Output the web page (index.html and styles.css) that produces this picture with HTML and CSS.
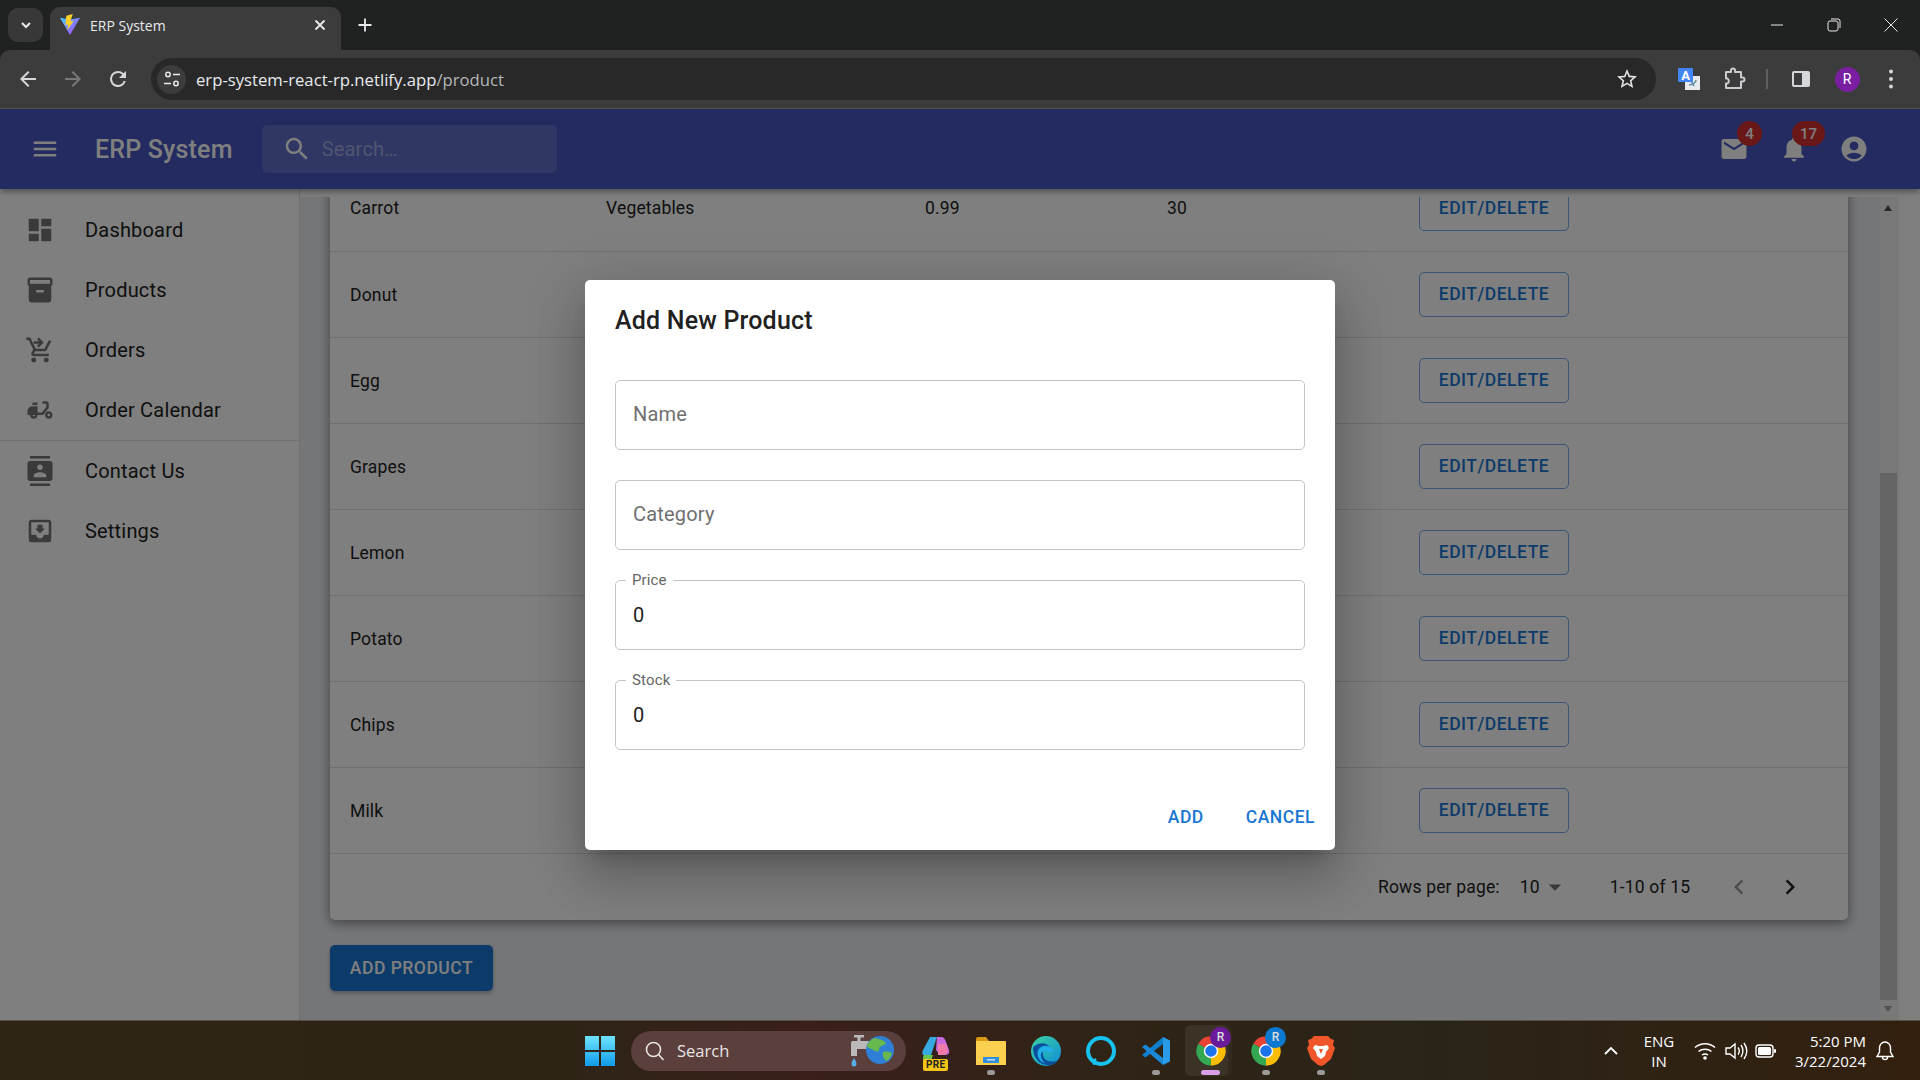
FILE: index.html
```html
<!DOCTYPE html>
<html lang="en">
<head>
    <meta charset="UTF-8">
    <meta name="viewport" content="width=device-width, initial-scale=1.0">
    <title>ERP System</title>
    <link rel="stylesheet" href="styles.css">
</head>
<body>
    <svg class="defs" width="0" height="0">
        <symbol id="chrome" viewBox="0 0 24 24">
            <path fill="#ea4335" d="M12 12L2.47 6.5A11 11 0 0 1 21.53 6.5z"/>
            <path fill="#fbbc04" d="M12 12L21.53 6.5A11 11 0 0 1 12 23z"/>
            <path fill="#34a853" d="M12 12L12 23A11 11 0 0 1 2.47 6.5z"/>
            <circle cx="12" cy="12" r="5.4" fill="#fff"/>
            <circle cx="12" cy="12" r="4.3" fill="#1a73e8"/>
        </symbol>
    </svg>

    <!-- browser chrome -->
    <div class="tabstrip">
        <button class="tab-search"><svg width="16" height="16" viewBox="0 0 16 16"><path d="M4 6l4 4 4-4" fill="none" stroke="#e8eaed" stroke-width="2"/></svg></button>
        <div class="tab">
            <svg class="favicon" width="22" height="22" viewBox="0 0 24 24">
                <defs><linearGradient id="vite" x1="0" y1="0" x2="1" y2="1"><stop offset="0" stop-color="#41d1ff"/><stop offset="1" stop-color="#bd34fe"/></linearGradient></defs>
                <path fill="url(#vite)" d="M1 4l11 2 11-2-11 19z"/>
                <path fill="#ffd028" d="M15 0L8 2l-1 10 3-.5-1 6 7-10-3.5.5z"/>
            </svg>
            <span class="tab-title">ERP System</span>
            <svg width="14" height="14" viewBox="0 0 14 14"><path d="M2.5 2.5l9 9m0-9l-9 9" stroke="#e8eaed" stroke-width="1.8"/></svg>
        </div>
        <button class="new-tab"><svg width="16" height="16" viewBox="0 0 16 16"><path d="M8 1.5v13M1.5 8h13" stroke="#e8eaed" stroke-width="1.8"/></svg></button>
        <div class="window-controls">
            <button><svg width="14" height="14" viewBox="0 0 14 14"><path d="M1 7h12" stroke="#e8e8e8"/></svg></button>
            <button><svg width="14" height="14" viewBox="0 0 14 14"><rect x="1" y="3" width="10" height="10" rx="2" fill="none" stroke="#e8e8e8"/><path d="M4 1h7a2 2 0 0 1 2 2v7" fill="none" stroke="#e8e8e8"/></svg></button>
            <button><svg width="14" height="14" viewBox="0 0 14 14"><path d="M.5.5l13 13m0-13l-13 13" stroke="#e8e8e8"/></svg></button>
        </div>
    </div>
    <div class="toolbar">
        <button class="tool"><svg width="24" height="24" viewBox="0 0 24 24"><path fill="#d5d7da" d="M20 11H7.83l5.59-5.59L12 4l-8 8 8 8 1.41-1.41L7.83 13H20z"/></svg></button>
        <button class="tool"><svg width="24" height="24" viewBox="0 0 24 24"><path fill="#77797b" d="M12 4l-1.41 1.41L16.17 11H4v2h12.17l-5.58 5.59L12 20l8-8z"/></svg></button>
        <button class="tool"><svg width="24" height="24" viewBox="0 0 24 24"><path fill="#d5d7da" d="M17.65 6.35A7.96 7.96 0 0 0 12 4a8 8 0 1 0 7.73 10h-2.08A6 6 0 1 1 12 6c1.66 0 3.14.69 4.22 1.78L13 11h7V4z"/></svg></button>
        <div class="omnibox">
            <span class="site-info"><svg width="20" height="20" viewBox="0 0 20 20"><circle cx="6" cy="5.5" r="2.2" fill="none" stroke="#e8eaed" stroke-width="1.5"/><path d="M11 5.5h7M2 14.5h7" stroke="#e8eaed" stroke-width="1.5"/><circle cx="14" cy="14.5" r="2.2" fill="none" stroke="#e8eaed" stroke-width="1.5"/></svg></span>
            <span class="url">erp-system-react-rp.netlify.app<span class="url-path">/product</span></span>
            <svg class="star" width="24" height="24" viewBox="0 0 24 24"><path fill="#e0e2e4" d="M22 9.24l-7.19-.62L12 2 9.19 8.63 2 9.24l5.46 4.73L5.82 21 12 17.27 18.18 21l-1.63-7.03L22 9.24zM12 15.4l-3.76 2.27 1-4.28-3.32-2.88 4.38-.38L12 6.1l1.71 4.04 4.38.38-3.32 2.88 1 4.28L12 15.4z"/></svg>
        </div>
        <button class="tool tool-first"><svg width="24" height="24" viewBox="0 0 24 24"><rect x="8" y="9" width="15" height="14" fill="#e8eaed"/><path d="M12 18c3 0 7-2 7-5M14 14l3 5" stroke="#5f8ca0" stroke-width="1.5" fill="none"/><rect x="1" y="1" width="15" height="14" rx="1" fill="#4285f4"/><text x="8.5" y="12.5" class="translate-a">A</text></svg></button>
        <button class="tool"><svg width="24" height="24" viewBox="0 0 24 24"><path fill="none" stroke="#c9cbce" stroke-width="2" stroke-linejoin="round" d="M4 5h5V3.5a2 2 0 0 1 4 0V5h6v5.5h1.5a2 2 0 0 1 0 4H19V21H4v-4.5h1.5a3 3 0 0 0 0-5H4z"/></svg></button>
        <span class="tool-sep"></span>
        <button class="tool tool-panel"><svg width="22" height="22" viewBox="0 0 22 22"><rect x="2" y="3" width="18" height="16" rx="2" fill="#d5d7da"/><rect x="4" y="5" width="8" height="12" fill="#3c3c3c"/></svg></button>
        <button class="tool tool-avatar"><span class="avatar">R</span></button>
        <button class="tool"><svg width="24" height="24" viewBox="0 0 24 24"><circle cx="12" cy="4.5" r="2" fill="#d5d7da"/><circle cx="12" cy="12" r="2" fill="#d5d7da"/><circle cx="12" cy="19.5" r="2" fill="#d5d7da"/></svg></button>
    </div>

    <!-- the app -->
    <div class="app">
        <header class="appbar">
            <button class="icon-btn"><svg class="icon" viewBox="0 0 24 24"><path d="M3 18h18v-2H3v2zm0-5h18v-2H3v2zm0-7v2h18V6H3z"/></svg></button>
            <div class="brand">ERP System</div>
            <div class="search">
                <svg class="icon" viewBox="0 0 24 24"><path d="M15.5 14h-.79l-.28-.27C15.41 12.59 16 11.11 16 9.5 16 5.91 13.09 3 9.5 3S3 5.91 3 9.5 5.91 16 9.5 16c1.61 0 3.09-.59 4.23-1.57l.27.28v.79l5 4.99L20.49 19l-4.99-5zm-6 0C7.01 14 5 11.99 5 9.5S7.01 5 9.5 5 14 7.01 14 9.5 11.99 14 9.5 14z"/></svg>
                <span class="search-text">Search…</span>
            </div>
            <div class="appbar-right">
                <button class="icon-btn">
                    <svg class="icon" viewBox="0 0 24 24"><path d="M20 4H4c-1.1 0-1.99.9-1.99 2L2 18c0 1.1.9 2 2 2h16c1.1 0 2-.9 2-2V6c0-1.1-.9-2-2-2zm0 4l-8 5-8-5V6l8 5 8-5v2z"/></svg>
                    <span class="badge">4</span>
                </button>
                <button class="icon-btn">
                    <svg class="icon" viewBox="0 0 24 24"><path d="M12 22c1.1 0 2-.9 2-2h-4c0 1.1.89 2 2 2zm6-6v-5c0-3.07-1.64-5.64-4.5-6.32V4c0-.83-.67-1.5-1.5-1.5s-1.5.67-1.5 1.5v.68C7.63 5.36 6 7.92 6 11v5l-2 2v1h16v-1l-2-2z"/></svg>
                    <span class="badge badge-wide">17</span>
                </button>
                <button class="icon-btn">
                    <svg class="icon" viewBox="0 0 24 24"><path d="M12 2C6.48 2 2 6.48 2 12s4.48 10 10 10 10-4.48 10-10S17.52 2 12 2zm0 4c1.93 0 3.5 1.57 3.5 3.5S13.93 13 12 13s-3.5-1.57-3.5-3.5S10.07 6 12 6zm0 14c-2.03 0-4.43-.82-6.14-2.88C7.55 15.8 9.68 15 12 15s4.45.8 6.14 2.12C16.43 19.18 14.03 20 12 20z"/></svg>
                </button>
            </div>
        </header>

        <div class="app-body">
            <nav class="sidebar">
                <ul class="nav-list nav-top">
                    <li><svg class="icon" viewBox="0 0 24 24"><path d="M3 13h8V3H3v10zm0 8h8v-6H3v6zm10 0h8V11h-8v10zm0-18v6h8V3h-8z"/></svg>Dashboard</li>
                    <li><svg class="icon" viewBox="0 0 24 24"><path d="M20 2H4c-1 0-2 .9-2 2v3.01c0 .72.43 1.34 1 1.69V20c0 1.1 1.1 2 2 2h14c.9 0 2-.9 2-2V8.7c.57-.35 1-.97 1-1.69V4c0-1.1-1-2-2-2zm-5 12H9v-2h6v2zm5-7H4V4l16-.02V7z"/></svg>Products</li>
                    <li><svg class="icon" viewBox="0 0 24 24"><path d="M7 18c-1.1 0-1.99.9-1.99 2S5.9 22 7 22s2-.9 2-2-.9-2-2-2zm10 0c-1.1 0-1.99.9-1.99 2s.89 2 1.99 2 2-.9 2-2-.9-2-2-2zm-1.45-5c.75 0 1.41-.41 1.75-1.03L21 4.96 19.25 4l-3.7 7H8.53L4.27 2H1v2h2l3.6 7.59-1.35 2.44C4.52 15.37 5.48 17 7 17h12v-2H7l1.1-2h7.45zM11 2l4 4-4 4-1.41-1.41L11.17 7H7V5h4.17L9.58 3.41 11 2z"/></svg>Orders</li>
                    <li><svg class="icon" viewBox="0 0 24 24"><path d="M19 7c0-1.1-.9-2-2-2h-3v2h3v2.65L13.52 14H10V9H6c-2.21 0-4 1.79-4 4v3h2c0 1.66 1.34 3 3 3s3-1.34 3-3h4.48L19 10.35V7zM7 17c-.55 0-1-.45-1-1h2c0 .55-.45 1-1 1zM6 6h4v2H6zm13 7c-1.66 0-3 1.34-3 3s1.34 3 3 3 3-1.34 3-3-1.34-3-3-3zm0 4c-.55 0-1-.45-1-1s.45-1 1-1 1 .45 1 1-.45 1-1 1z"/></svg>Order Calendar</li>
                </ul>
                <ul class="nav-list">
                    <li><svg class="icon" viewBox="0 0 24 24"><path d="M20 0H4v2h16V0zM4 24h16v-2H4v2zM20 4H4c-1.1 0-2 .9-2 2v12c0 1.1.9 2 2 2h16c1.1 0 2-.9 2-2V6c0-1.1-.9-2-2-2zm-8 2.75c1.24 0 2.25 1.01 2.25 2.25s-1.01 2.25-2.25 2.25S9.75 10.24 9.75 9 10.76 6.75 12 6.75zM17 17H7v-1.5c0-1.67 3.33-2.5 5-2.5s5 .83 5 2.5V17z"/></svg>Contact Us</li>
                    <li><svg class="icon" viewBox="0 0 24 24"><path d="M19 3H4.99c-1.11 0-1.98.9-1.98 2L3 19c0 1.1.88 2 1.99 2H19c1.1 0 2-.9 2-2V5c0-1.1-.9-2-2-2zm0 12h-4c0 1.66-1.35 3-3 3s-3-1.34-3-3H4.99V5H19v10zm-3-5h-2V7h-4v3H8l4 4 4-4z"/></svg>Settings</li>
                </ul>
            </nav>

            <main class="main">
                <div class="content">
                    <div class="paper">
                        <table class="products">
                            <colgroup><col class="col-name"><col class="col-cat"><col class="col-price"><col class="col-stock"><col></colgroup>
                            <tr><td>Carrot</td><td>Vegetables</td><td>0.99</td><td>30</td><td><button class="btn-outline">EDIT/DELETE</button></td></tr>
                            <tr><td>Donut</td><td></td><td></td><td></td><td><button class="btn-outline">EDIT/DELETE</button></td></tr>
                            <tr><td>Egg</td><td></td><td></td><td></td><td><button class="btn-outline">EDIT/DELETE</button></td></tr>
                            <tr><td>Grapes</td><td></td><td></td><td></td><td><button class="btn-outline">EDIT/DELETE</button></td></tr>
                            <tr><td>Lemon</td><td></td><td></td><td></td><td><button class="btn-outline">EDIT/DELETE</button></td></tr>
                            <tr><td>Potato</td><td></td><td></td><td></td><td><button class="btn-outline">EDIT/DELETE</button></td></tr>
                            <tr><td>Chips</td><td></td><td></td><td></td><td><button class="btn-outline">EDIT/DELETE</button></td></tr>
                            <tr><td>Milk</td><td></td><td></td><td></td><td><button class="btn-outline">EDIT/DELETE</button></td></tr>
                        </table>
                        <div class="pagination">
                            <span class="rows-label">Rows per page:</span>
                            <span class="rows-value">10</span>
                            <svg class="caret" viewBox="0 0 24 24"><path d="M7 10l5 5 5-5z"/></svg>
                            <span class="range">1-10 of 15</span>
                            <svg class="pager pager-off" viewBox="0 0 24 24"><path d="M15.41 7.41L14 6l-6 6 6 6 1.41-1.41L10.83 12z"/></svg>
                            <svg class="pager" viewBox="0 0 24 24"><path d="M10 6L8.59 7.41 13.17 12l-4.58 4.59L10 18l6-6z"/></svg>
                        </div>
                    </div>
                    <button class="btn-primary">ADD PRODUCT</button>
                </div>
                <div class="scrollbar">
                    <span class="arrow-up"></span>
                    <span class="scroll-thumb"></span>
                    <span class="arrow-down"></span>
                </div>
            </main>
        </div>

        <div class="overlay">
            <div class="dialog">
                <h2 class="dialog-title">Add New Product</h2>
                <div class="dialog-content">
                    <div class="field"><span class="placeholder">Name</span></div>
                    <div class="field"><span class="placeholder">Category</span></div>
                    <div class="field"><span class="field-label">Price</span><span class="field-value">0</span></div>
                    <div class="field"><span class="field-label">Stock</span><span class="field-value">0</span></div>
                </div>
                <div class="dialog-actions">
                    <button class="btn-text">ADD</button>
                    <button class="btn-text">CANCEL</button>
                </div>
            </div>
        </div>
    </div>

    <!-- windows taskbar -->
    <footer class="taskbar">
        <div class="task-app start">
            <svg width="30" height="30" viewBox="0 0 30 30">
                <defs><linearGradient id="win" x1="0" y1="0" x2="0" y2="1"><stop offset="0" stop-color="#6fe4ff"/><stop offset="1" stop-color="#0f9be8"/></linearGradient></defs>
                <path fill="url(#win)" d="M0 0h14v14H0zM16 0h14v14H16zM0 16h14v14H0zM16 16h14v14H16z"/>
            </svg>
        </div>
        <div class="task-search">
            <svg width="22" height="22" viewBox="0 0 22 22"><circle cx="9.5" cy="9.5" r="7" fill="none" stroke="#e8e4e2" stroke-width="1.6"/><path d="M14.5 14.5l5 5.5" stroke="#e8e4e2" stroke-width="1.6"/></svg>
            <span class="task-search-text">Search</span>
            <svg class="task-search-art" width="46" height="34" viewBox="0 0 46 34">
                <path fill="#b9b9b9" d="M5 1h10v2.500h-3.500V7H20v8H8v7H2V9a2 2 0 0 1 2-2h4.500V3.500H5z"/>
                <path fill="#58aee6" d="M5 24c-1.500 2.500-2.500 4-2.500 6a2.500 2.500 0 0 0 5 0c0-2-1-3.500-2.500-6z"/>
                <circle cx="31" cy="16" r="14" fill="#2f7fd6"/>
                <path fill="#67b84e" d="M26 4c4 1 9 2 11 5-1 3-5 2-7 5 1 3-1 4-4 3-3-2-6-3-8-4 0-4 4-8 8-9zM34 18c3-1 7 0 9 1-1 4-3 7-6 8-2-2-4-6-3-9z"/>
            </svg>
        </div>
        <div class="task-apps">
            <div class="task-app">
                <svg width="30" height="30" viewBox="0 0 30 30">
                    <path fill="#36a9e0" d="M9 1h7L10 19H3C1 19 1 17 2 14z"/>
                    <path fill="#6bc24f" d="M3 19h9l-2 6H5c-3 0-4-3-2-6z"/>
                    <path fill="#c86be0" d="M16 1h4c3 0 4 2 5 5l3 8c1 3-1 5-4 5h-5l-4-5z"/>
                    <path fill="#f07ba8" d="M17 8h8l2 8-4 3h-6z"/>
                </svg>
                <span class="pre-tag">PRE</span>
            </div>
            <div class="task-app">
                <svg width="32" height="30" viewBox="0 0 32 30">
                    <path fill="#d99a12" d="M1 3a2 2 0 0 1 2-2h8l3 4h-13z"/>
                    <path fill="#fbd04e" d="M1 5h29a1 1 0 0 1 1 1v23H1z"/>
                    <path fill="#2f8fd8" d="M8 21h16v5a1 1 0 0 1-1 1H9a1 1 0 0 1-1-1z"/>
                    <path fill="#fff" opacity=".7" d="M12 23h8v1.5h-8z"/>
                </svg>
                <span class="task-dot"></span>
            </div>
            <div class="task-app">
                <svg width="30" height="30" viewBox="0 0 30 30">
                    <defs><linearGradient id="edge" x1="0" y1="0" x2="1" y2="1"><stop offset="0" stop-color="#3bd5a0"/><stop offset="1" stop-color="#0f8ad8"/></linearGradient></defs>
                    <circle cx="15" cy="15" r="15" fill="url(#edge)"/>
                    <path fill="#0b4f9e" d="M2 12c0 10 7 18 17 17 3 0 6-2 8-5-5 3-14 2-15-5-1-5 4-7 8-5-1-6-8-8-13-6-3 1-5 3-5 4z"/>
                    <path fill="#1fb0e8" d="M7 20c-2-6 3-11 9-10 4 .5 6 3 6 6h-6c-3-2-7 0-6 5 .4 2 2 5 5 6-4 0-7-3-8-7z"/>
                </svg>
            </div>
            <div class="task-app">
                <svg width="32" height="32" viewBox="0 0 32 32"><circle cx="16" cy="16" r="13" fill="none" stroke="#18c2ee" stroke-width="4"/><path fill="#18c2ee" d="M7 25l4-2 1 6-4 1z"/></svg>
            </div>
            <div class="task-app">
                <svg width="30" height="30" viewBox="0 0 30 30">
                    <path fill="#0f7fcc" d="M22 1v7L4.500 21.500 1 19z"/>
                    <path fill="#1a8ad8" d="M22 29v-7L4.500 8.500 1 11z"/>
                    <path fill="#2a9be8" d="M22 1l7 3.500v21L22 29z"/>
                </svg>
                <span class="task-dot"></span>
            </div>
            <div class="task-app task-active">
                <svg width="32" height="32" viewBox="0 0 24 24"><use href="#chrome"/></svg>
                <span class="profile-tag tag-purple">R</span>
                <span class="task-pill"></span>
            </div>
            <div class="task-app">
                <svg width="32" height="32" viewBox="0 0 24 24"><use href="#chrome"/></svg>
                <span class="profile-tag tag-blue">R</span>
                <span class="task-dot"></span>
            </div>
            <div class="task-app">
                <svg width="28" height="32" viewBox="0 0 28 32">
                    <path fill="#f1562b" d="M7 1h14l3 3 3 1-1 5 2 3-4 11-7 6-3 1-3-1-7-6-4-11 2-3-1-5 3-1z"/>
                    <path fill="#fff" d="M8 10l4 1h4l4-1 2 3-3 4-1 4-4 3-4-3-1-4-3-4z"/>
                    <path fill="#f1562b" d="M12 14h4l-2 5z"/>
                </svg>
                <span class="task-dot"></span>
            </div>
        </div>
        <div class="tray">
            <svg class="tray-chevron" width="16" height="10" viewBox="0 0 16 10"><path d="M2 8l6-6 6 6" fill="none" stroke="#fff" stroke-width="1.8"/></svg>
            <div class="tray-lang">ENG<br>IN</div>
            <svg width="24" height="20" viewBox="0 0 24 20"><g fill="none" stroke="#fff" stroke-width="1.5"><path d="M2 6.500c5.500-5 14.500-5 20 0"/><path d="M5.500 10.500c3.500-3 9.500-3 13 0"/><path d="M9 14c1.800-1.300 4.200-1.300 6 0"/></g><circle cx="12" cy="17" r="1.8" fill="#fff"/></svg>
            <svg width="24" height="20" viewBox="0 0 24 20"><g fill="none" stroke="#fff" stroke-width="1.4"><path d="M2 7h4l5-4v14l-5-4H2z"/><path d="M14 6.500c1.500 2 1.500 5 0 7"/><path d="M17 4c2.500 3.500 2.500 8.500 0 12"/><path d="M20 2c3.500 5 3.500 11 0 16"/></g></svg>
            <svg width="22" height="14" viewBox="0 0 22 14"><rect x="1" y="1" width="17" height="12" rx="3" fill="none" stroke="#fff" stroke-width="1.4"/><rect x="3" y="3" width="13" height="8" rx="1.5" fill="#fff"/><rect x="19" y="5" width="2" height="4" rx="1" fill="#fff"/></svg>
            <div class="tray-clock">5:20 PM<br>3/22/2024</div>
            <svg width="20" height="22" viewBox="0 0 20 22"><path fill="none" stroke="#fff" stroke-width="1.4" d="M10 2c-3.500 0-5.500 3-5.500 6v4L2 16.500h16L15.500 12V8c0-3-2-6-5.500-6zM7.500 17c0 3.500 5 3.500 5 0"/></svg>
        </div>
    </footer>
</body>
</html>
```

FILE: styles.css
```css
* { margin: 0; padding: 0; box-sizing: border-box; }
html, body { width: 1920px; height: 1080px; overflow: hidden; }
body { display: flex; flex-direction: column; background: #202221; font-family: Roboto, sans-serif; color: #212121; }
button { background: none; border: none; font: inherit; color: inherit; }
ul { list-style: none; }
.defs { position: absolute; }

/* browser chrome */
.tabstrip { height: 50px; display: flex; align-items: flex-end; background: #202221; }
.tab-search { width: 35px; height: 34px; margin: 0 7px 8px 8px; border-radius: 10px; background: #383838; display: flex; align-items: center; justify-content: center; }
.tab { width: 291px; height: 43px; display: flex; align-items: center; padding: 0 14px 7px 9px; background: #3c3c3c; border-radius: 10px 10px 0 0; }
.favicon { flex: none; }
.tab-title { flex: 1; margin-left: 9px; font: 14px "Open Sans", sans-serif; color: #e8eaed; }
.new-tab { width: 48px; height: 43px; padding-bottom: 7px; display: flex; align-items: center; justify-content: center; }
.window-controls { margin-left: auto; display: flex; align-self: stretch; padding-right: 1px; }
.window-controls button { width: 57px; display: flex; align-items: center; justify-content: center; }

.toolbar { height: 59px; display: flex; align-items: center; padding: 0 6px; background: #3c3c3c; border-radius: 10px 10px 0 0; border-bottom: 1px solid #57544f; }
.tool { width: 44px; height: 44px; margin-right: 1px; flex: none; display: flex; align-items: center; justify-content: center; }
.tool-first { margin-left: 11px; }
.tool-panel { margin-right: 2px; }
.tool-avatar { margin-right: 0; }
.tool-sep { width: 2px; height: 20px; margin: 0 11px 0 9px; background: #5f5f5f; }
.translate-a { font: bold 13px Roboto, sans-serif; fill: #fff; text-anchor: middle; }
.omnibox { width: 1507px; height: 42px; margin-left: 10px; display: flex; align-items: center; padding: 0 17px 0 6px; border-radius: 21px; background: #282828; }
.site-info { width: 29px; height: 29px; border-radius: 50%; background: #3c3c3c; display: flex; align-items: center; justify-content: center; }
.url { margin-left: 10px; font: 16.7px "Open Sans", sans-serif; color: #e8eaed; }
.url-path { color: #b4b6b8; }
.star { margin-left: auto; }
.avatar { width: 25px; height: 25px; border-radius: 50%; background: #7b1fa2; color: #fff; font-size: 14px; display: flex; align-items: center; justify-content: center; }

/* app */
.app { position: relative; flex: 1; display: flex; flex-direction: column; min-height: 0; background: #fff; }
.icon { width: 30px; height: 30px; fill: currentColor; flex: none; }
.appbar { height: 80px; flex: none; position: relative; z-index: 1; display: flex; align-items: center; padding: 0 51px 0 30px; background: #4656c0; color: #fff; box-shadow: 0 3px 6px rgba(0,0,0,.35); }
.icon-btn { position: relative; width: 30px; height: 30px; display: flex; }
.brand { margin-left: 35px; font-size: 25px; font-weight: 500; letter-spacing: .19px; }
.search { width: 295px; height: 48px; margin-left: 29px; display: flex; align-items: center; padding-left: 20px; border-radius: 5px; background: rgba(255,255,255,.15); }
.search-text { margin-left: 10px; font-size: 20px; letter-spacing: .19px; color: rgba(255,255,255,.42); }
.appbar-right { margin-left: auto; display: flex; gap: 30px; }
.badge { position: absolute; top: -13px; right: -13px; min-width: 25px; height: 25px; padding: 0 8px; border-radius: 13px; background: #d32f2f; color: #fff; font-size: 15px; font-weight: 500; display: flex; align-items: center; justify-content: center; }
.badge-wide { right: -16px; }

.app-body { flex: 1; display: flex; min-height: 0; background: #fff; }
.sidebar { width: 300px; flex: none; border-right: 1px solid #e0e0e0; }
.nav-top { padding-top: 11px; border-bottom: 1px solid #e0e0e0; }
.nav-list li { height: 60px; display: flex; align-items: center; padding-left: 25px; font-size: 20px; letter-spacing: .19px; }
.nav-list .icon { margin-right: 30px; color: #757575; }

.main { flex: 1; margin: 8px 21px 0 0; display: flex; overflow: hidden; background: #ebedf0; }
.content { flex: 1; padding: 0 32px 0 30px; }
.paper { margin-top: -32px; background: #fff; border-radius: 5px; box-shadow: 0 3px 12px rgba(0,0,0,.45); }
.products { width: 100%; border-collapse: collapse; table-layout: fixed; font-size: 17.5px; letter-spacing: .17px; }
.col-name { width: 256px; }
.col-cat { width: 319px; }
.col-price { width: 242px; }
.col-stock { width: 252px; }
.products td { height: 86px; padding: 1px 20px 0; border-bottom: 1px solid #e0e0e0; }
.btn-outline { width: 150px; height: 45px; display: block; padding-bottom: 1px; border: 1px solid rgba(25,118,210,.6); border-radius: 5px; color: #1976d2; font-size: 17.5px; font-weight: 500; letter-spacing: .5px; }
.pagination { height: 66px; display: flex; align-items: center; font-size: 17.5px; letter-spacing: .17px; padding-left: 1048px; }
.rows-value { margin-left: 20px; }
.caret { width: 30px; height: 30px; fill: #757575; }
.range { margin-left: 40px; }
.pager { width: 30px; height: 30px; fill: #212121; }
.range + .pager { margin-left: 34px; }
.pager + .pager { margin-left: 21px; }
.pager-off { fill: #9e9e9e; }
.btn-primary { width: 163px; height: 46px; margin-top: 25px; display: block; border-radius: 5px; background: #1976d2; color: #fff; font-size: 17.5px; font-weight: 500; letter-spacing: .5px; box-shadow: 0 2px 4px rgba(0,0,0,.3); }

.scrollbar { width: 19px; flex: none; display: flex; flex-direction: column; align-items: flex-start; background: #f0f0f1; }
.arrow-up { width: 0; height: 0; margin: 8px 0 0 4px; border: 4.5px solid transparent; border-top: 0; border-bottom: 6px solid #505050; }
.scroll-thumb { width: 17px; height: 527px; margin-top: auto; background: #c8c8c8; }
.arrow-down { width: 0; height: 0; margin: 6px 0 8px 4px; border: 4.5px solid transparent; border-bottom: 0; border-top: 6px solid #a3a3a3; }

/* dialog over everything in the app */
.overlay { position: absolute; inset: 0; z-index: 2; display: flex; align-items: center; justify-content: center; background: rgba(0,0,0,.5); }
.dialog { width: 750px; height: 570px; background: #fff; border-radius: 5px; box-shadow: 0 14px 19px -9px rgba(0,0,0,.2), 0 30px 48px 4px rgba(0,0,0,.14), 0 11px 58px 10px rgba(0,0,0,.12); }
.dialog-title { padding: 21px 30px 19px; font-size: 25px; font-weight: 500; line-height: 40px; letter-spacing: .19px; }
.dialog-content { padding: 20px 30px 34px; display: flex; flex-direction: column; gap: 30px; }
.field { position: relative; height: 70px; display: flex; align-items: center; padding: 0 17px; border: 1px solid #c4c4c4; border-radius: 5px; font-size: 20px; letter-spacing: .19px; }
.placeholder { margin-top: -2px; color: #707070; }
.field-value { color: #212121; }
.field-label { position: absolute; top: -10px; left: 10px; padding: 0 6px; background: #fff; font-size: 15px; line-height: 18px; letter-spacing: .14px; color: #666; }
.dialog-actions { display: flex; justify-content: flex-end; gap: 22px; padding: 11px 10px 9px; }
.btn-text { height: 45px; padding: 0 10px; color: #1976d2; font-size: 17.5px; font-weight: 500; letter-spacing: .5px; }

/* taskbar */
.taskbar { height: 60px; flex: none; display: flex; align-items: center; padding-left: 572px; background: linear-gradient(90deg, #2e2516 0%, #2e2416 30%, #3a1f1b 42%, #2e2416 60%, #2a2418 75%, #33200f 100%); border-top: 1px solid #55504a; font-family: "Open Sans", sans-serif; color: #fff; }
.task-app { position: relative; width: 55px; height: 59px; flex: none; display: flex; align-items: center; justify-content: center; }
.start { margin-right: 4px; }
.task-search { width: 275px; height: 40px; flex: none; display: flex; align-items: center; padding: 0 11px 0 13px; border-radius: 20px; background: #5a3f3d; }
.task-search-text { margin-left: 11px; font-size: 16.5px; color: #e8e4e2; }
.task-search-art { margin-left: auto; }
.task-apps { display: flex; margin-left: 2px; }
.task-active::before { content: ""; position: absolute; left: 2px; right: 10px; top: 4px; bottom: 4px; border-radius: 6px; background: rgba(255,255,255,.07); box-shadow: 4px 0 0 rgba(255,255,255,.03); }
.task-active svg { position: relative; }
.pre-tag { position: absolute; left: 15px; bottom: 9px; padding: 0 3px; border-radius: 2px; background: #f5c518; color: #222; font: bold 10px/12px Roboto, sans-serif; letter-spacing: .3px; }
.task-dot { position: absolute; bottom: 5px; left: 24px; width: 8px; height: 5px; border-radius: 3px; background: #9c9a98; }
.task-pill { position: absolute; bottom: 5px; left: 18px; width: 19px; height: 5px; border-radius: 3px; background: #d9a0e8; }
.profile-tag { position: absolute; top: 6px; right: 7px; width: 21px; height: 21px; border-radius: 50%; color: #ddd; font: 500 12px/21px Roboto, sans-serif; text-align: center; }
.tag-purple { background: #6a1b9a; }
.tag-blue { background: #0b79d0; }
.tray { margin-left: auto; display: flex; align-items: center; gap: 7px; padding-right: 25px; font-size: 15px; }
.tray-chevron { margin-right: 8px; }
.tray-lang { width: 50px; margin-right: 2px; text-align: center; line-height: 20px; }
.tray-clock { width: 82px; margin: 0 2px 0 0; text-align: right; line-height: 20px; }
```
